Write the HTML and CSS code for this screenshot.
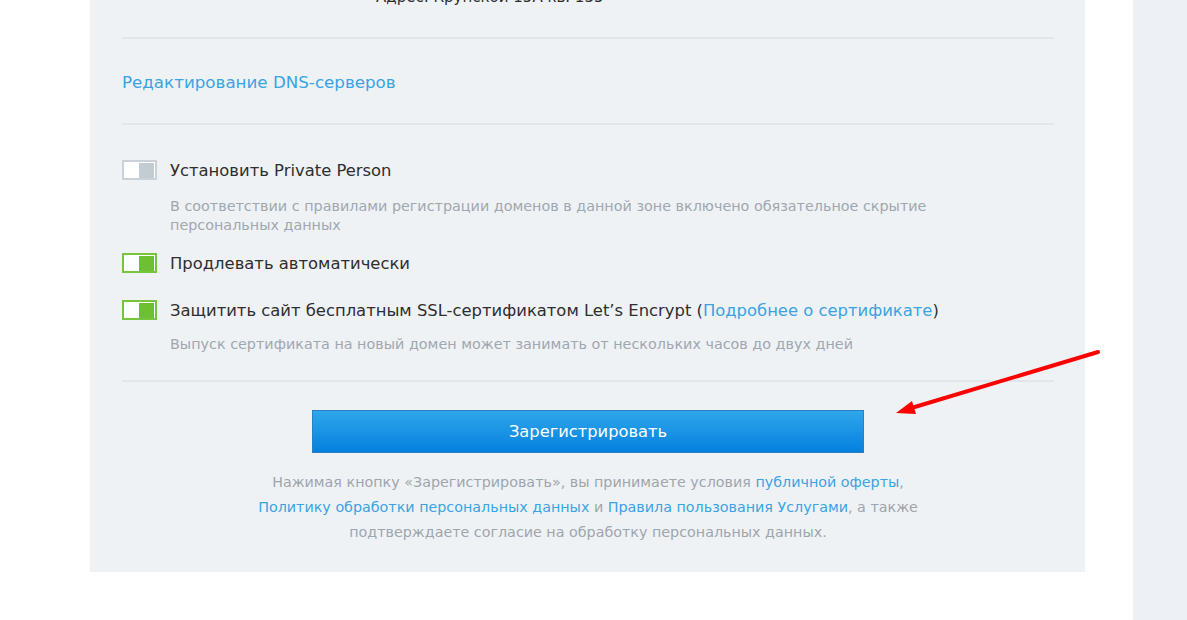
FILE: index.html
```html
<!DOCTYPE html>
<html lang="ru">
<head>
  <meta charset="UTF-8">
  <title>Регистрация домена</title>
  <link rel="stylesheet" href="styles.css">
</head>
<body>
  <div class="content">
    <div class="panel">
      <div class="addr">Адрес: Крупской 15А кв. 135</div>

      <div class="section">
        <a href="#" class="link">Редактирование DNS-серверов</a>
      </div>

      <div class="options">
        <div class="option">
          <span class="toggle"><span class="knob"></span></span>
          <span>Установить Private Person</span>
        </div>
        <p class="hint">В соответствии с правилами регистрации доменов в данной зоне включено обязательное скрытие персональных данных</p>

        <div class="option second">
          <span class="toggle on"><span class="knob"></span></span>
          <span>Продлевать автоматически</span>
        </div>

        <div class="option third">
          <span class="toggle on"><span class="knob"></span></span>
          <span>Защитить сайт бесплатным SSL-сертификатом Let’s Encrypt (<a href="#" class="link">Подробнее о сертификате</a>)</span>
        </div>
        <p class="hint short">Выпуск сертификата на новый домен может занимать от нескольких часов до двух дней</p>
      </div>

      <div class="submit">
        <button class="btn">Зарегистрировать</button>
        <p class="terms">
          Нажимая кнопку «Зарегистрировать», вы принимаете условия <a href="#" class="link">публичной оферты</a>,<br>
          <a href="#" class="link">Политику обработки персональных данных</a> и <a href="#" class="link">Правила пользования Услугами</a>, а также<br>
          подтверждаете согласие на обработку персональных данных.
        </p>
      </div>
    </div>
  </div>

  <div class="aside"></div>

  <!-- red annotation arrow drawn over the screenshot -->
  <svg class="arrow" width="1187" height="620" viewBox="0 0 1187 620">
    <line x1="1098" y1="352" x2="908" y2="409" stroke="#ff0000" stroke-width="4" stroke-linecap="round"/>
    <polygon points="896,413 912,401 916,414" fill="#ff0000"/>
  </svg>
</body>
</html>
```

FILE: styles.css
```css
body {
  margin: 0;
  background: #fff;
  font-family: "DejaVu Sans", sans-serif;
  color: #2e2e2e;
  display: flex;
  height: 100vh;
  overflow: hidden;
  position: relative;
}
.content {
  width: 995px;
  padding-left: 90px;
  padding-right: 48px;
}
.panel {
  background: #eff2f5;
  padding: 0 31px 27px 32px;
}
.addr {
  margin-top: -15px;
  padding-left: 254px;
  font-size: 15px;
  line-height: 24px;
  padding-bottom: 28px;
  border-bottom: 2px solid #e2e6ea;
}
.section {
  padding: 31px 0 29px;
  font-size: 16.7px;
  line-height: 24px;
  border-bottom: 2px solid #e2e6ea;
}
.link {
  color: #3aa3e3;
  text-decoration: none;
}
.options {
  padding-top: 34px;
  padding-bottom: 26px;
  border-bottom: 2px solid #e2e6ea;
}
.option {
  display: flex;
  align-items: center;
  font-size: 16.4px;
  line-height: 24px;
}
.option.second { margin-top: 17px; }
.option.third { margin-top: 23px; }
.toggle {
  width: 35px;
  height: 20px;
  box-sizing: border-box;
  border: 2px solid #c9d2d8;
  background: #fff;
  display: flex;
  justify-content: flex-end;
  align-items: center;
  padding: 1px;
  margin-right: 13px;
  margin-top: -2px;
}
.knob {
  width: 15px;
  height: 15px;
  background: #c2cdd3;
}
.toggle.on { border-color: #77c63a; }
.toggle.on .knob { background: #6dc02f; }
.hint {
  margin: 14px 0 0 48px;
  font-size: 14.35px;
  line-height: 19px;
  color: #a0a7af;
  max-width: 780px;
}
.hint.short { margin-top: 12px; }
.submit {
  padding-top: 28px;
  text-align: center;
}
.btn {
  width: 552px;
  height: 43px;
  border: 1px solid #2c80c0;
  background: linear-gradient(#2ea7eb, #0580de);
  color: #fff;
  font-family: inherit;
  font-size: 16.3px;
  cursor: pointer;
}
.terms {
  margin: 17px 0 0;
  font-size: 14.3px;
  line-height: 25px;
  color: #9ea5ad;
}
.aside {
  width: 54px;
  margin-left: auto;
  background: #edf1f5;
}
.arrow {
  position: absolute;
  left: 0;
  top: 0;
  pointer-events: none;
}
```
